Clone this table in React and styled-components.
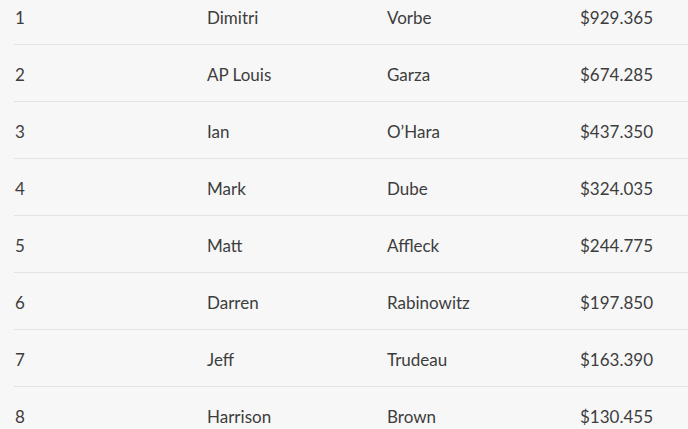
import React from "react";
import styled, { createGlobalStyle } from "styled-components";

const Global = createGlobalStyle`
  html, body { margin: 0; padding: 0; background: #f7f7f7; }
  body { font-family: Lato, "Open Sans", sans-serif; overflow: hidden; }
`;

const Page = styled.div`
  width: 688px;
  height: 429px;
  overflow: hidden;
  background: #f7f7f7;
`;

const Table = styled.div`
  margin: -12px 0 0 14px;
  display: flex;
  flex-direction: column;
`;

const Row = styled.div`
  display: grid;
  grid-template-columns: 192px 180px 193px 1fr;
  height: 57px;
  align-items: center;
  border-bottom: 1px solid #e3e3e3;
  box-sizing: border-box;
`;

const Cell = styled.div`
  padding-left: 1px;
  font-size: 17px;
  color: #3d3d3d;
  white-space: nowrap;
  line-height: 20px;
  padding-top: 3px;
`;

const data = [
  ["1", "Dimitri", "Vorbe", "$929.365"],
  ["2", "AP Louis", "Garza", "$674.285"],
  ["3", "Ian", "O\u2019Hara", "$437.350"],
  ["4", "Mark", "Dube", "$324.035"],
  ["5", "Matt", "Affleck", "$244.775"],
  ["6", "Darren", "Rabinowitz", "$197.850"],
  ["7", "Jeff", "Trudeau", "$163.390"],
  ["8", "Harrison", "Brown", "$130.455"],
];

export default function App() {
  return (
    <Page>
      <Global />
      <Table>
        {data.map((r) => (
          <Row key={r[0]}>
            {r.map((c, i) => (
              <Cell key={i}>{c}</Cell>
            ))}
          </Row>
        ))}
      </Table>
    </Page>
  );
}
